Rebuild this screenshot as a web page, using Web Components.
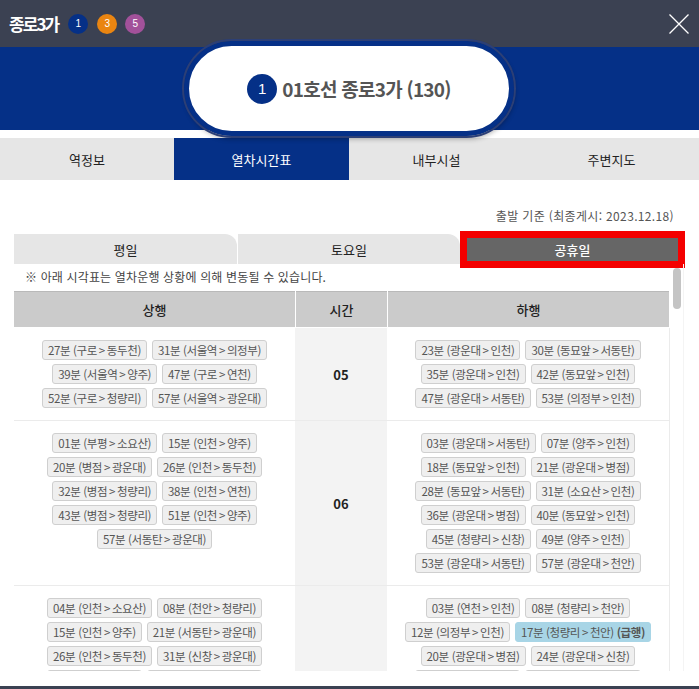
<!DOCTYPE html>
<html lang="ko">
<head>
<meta charset="utf-8">
<title>종로3가</title>
<style>
  html, body { margin: 0; padding: 0; background: #fff; }
  body { font-family: "Noto Sans CJK KR", "Noto Sans", sans-serif; width: 699px; height: 689px; overflow: hidden; }
</style>
</head>
<body>
<station-popup>
  <popup-header slot="header" title="종로3가">
    <line-badge color="#053087">1</line-badge>
    <line-badge color="#ea8511" style="margin-left:9px">3</line-badge>
    <line-badge color="#a2519a" style="margin-left:8px">5</line-badge>
  </popup-header>
  <station-banner slot="banner">01호선 종로3가 (130)</station-banner>
  <main-tabs slot="tabs"></main-tabs>
  <day-tabs slot="days"></day-tabs>

  <time-table slot="table">
    <time-row hour="05">
      <time-chip slot="up">27분 (구로&thinsp;&gt;&thinsp;동두천)</time-chip><time-chip slot="up">31분 (서울역&thinsp;&gt;&thinsp;의정부)</time-chip>
      <time-chip slot="up">39분 (서울역&thinsp;&gt;&thinsp;양주)</time-chip><time-chip slot="up">47분 (구로&thinsp;&gt;&thinsp;연천)</time-chip>
      <time-chip slot="up">52분 (구로&thinsp;&gt;&thinsp;청량리)</time-chip><time-chip slot="up">57분 (서울역&thinsp;&gt;&thinsp;광운대)</time-chip>
      <time-chip slot="down">23분 (광운대&thinsp;&gt;&thinsp;인천)</time-chip><time-chip slot="down">30분 (동묘앞&thinsp;&gt;&thinsp;서동탄)</time-chip>
      <time-chip slot="down">35분 (광운대&thinsp;&gt;&thinsp;인천)</time-chip><time-chip slot="down">42분 (동묘앞&thinsp;&gt;&thinsp;인천)</time-chip>
      <time-chip slot="down">47분 (광운대&thinsp;&gt;&thinsp;서동탄)</time-chip><time-chip slot="down">53분 (의정부&thinsp;&gt;&thinsp;인천)</time-chip>
    </time-row>
    <time-row hour="06">
      <time-chip slot="up">01분 (부평&thinsp;&gt;&thinsp;소요산)</time-chip><time-chip slot="up">15분 (인천&thinsp;&gt;&thinsp;양주)</time-chip>
      <time-chip slot="up">20분 (병점&thinsp;&gt;&thinsp;광운대)</time-chip><time-chip slot="up">26분 (인천&thinsp;&gt;&thinsp;동두천)</time-chip>
      <time-chip slot="up">32분 (병점&thinsp;&gt;&thinsp;청량리)</time-chip><time-chip slot="up">38분 (인천&thinsp;&gt;&thinsp;연천)</time-chip>
      <time-chip slot="up">43분 (병점&thinsp;&gt;&thinsp;청량리)</time-chip><time-chip slot="up">51분 (인천&thinsp;&gt;&thinsp;양주)</time-chip>
      <time-chip slot="up">57분 (서동탄&thinsp;&gt;&thinsp;광운대)</time-chip>
      <time-chip slot="down">03분 (광운대&thinsp;&gt;&thinsp;서동탄)</time-chip><time-chip slot="down">07분 (양주&thinsp;&gt;&thinsp;인천)</time-chip>
      <time-chip slot="down">18분 (동묘앞&thinsp;&gt;&thinsp;인천)</time-chip><time-chip slot="down">21분 (광운대&thinsp;&gt;&thinsp;병점)</time-chip>
      <time-chip slot="down">28분 (동묘앞&thinsp;&gt;&thinsp;서동탄)</time-chip><time-chip slot="down">31분 (소요산&thinsp;&gt;&thinsp;인천)</time-chip>
      <time-chip slot="down">36분 (광운대&thinsp;&gt;&thinsp;병점)</time-chip><time-chip slot="down">40분 (동묘앞&thinsp;&gt;&thinsp;인천)</time-chip>
      <time-chip slot="down">45분 (청량리&thinsp;&gt;&thinsp;신창)</time-chip><time-chip slot="down">49분 (양주&thinsp;&gt;&thinsp;인천)</time-chip>
      <time-chip slot="down">53분 (광운대&thinsp;&gt;&thinsp;서동탄)</time-chip><time-chip slot="down">57분 (광운대&thinsp;&gt;&thinsp;천안)</time-chip>
    </time-row>
    <time-row hour="07">
      <time-chip slot="up">04분 (인천&thinsp;&gt;&thinsp;소요산)</time-chip><time-chip slot="up">08분 (천안&thinsp;&gt;&thinsp;청량리)</time-chip>
      <time-chip slot="up">15분 (인천&thinsp;&gt;&thinsp;양주)</time-chip><time-chip slot="up">21분 (서동탄&thinsp;&gt;&thinsp;광운대)</time-chip>
      <time-chip slot="up">26분 (인천&thinsp;&gt;&thinsp;동두천)</time-chip><time-chip slot="up">31분 (신창&thinsp;&gt;&thinsp;광운대)</time-chip>
      <time-chip slot="up">38분 (인천&thinsp;&gt;&thinsp;양주)</time-chip><time-chip slot="up">42분 (서동탄&thinsp;&gt;&thinsp;광운대)</time-chip>
      <time-chip slot="down">03분 (연천&thinsp;&gt;&thinsp;인천)</time-chip><time-chip slot="down">08분 (청량리&thinsp;&gt;&thinsp;천안)</time-chip>
      <time-chip slot="down">12분 (의정부&thinsp;&gt;&thinsp;인천)</time-chip><time-chip slot="down" express>17분 (청량리&thinsp;&gt;&thinsp;천안) <b>(급행)</b></time-chip>
      <time-chip slot="down">20분 (광운대&thinsp;&gt;&thinsp;병점)</time-chip><time-chip slot="down">24분 (광운대&thinsp;&gt;&thinsp;신창)</time-chip>
      <time-chip slot="down">29분 (광운대&thinsp;&gt;&thinsp;병점)</time-chip><time-chip slot="down">33분 (동묘앞&thinsp;&gt;&thinsp;서동탄)</time-chip>
      <time-chip slot="down">38분 (광운대&thinsp;&gt;&thinsp;인천)</time-chip><time-chip slot="down">42분 (청량리&thinsp;&gt;&thinsp;신창)</time-chip>
      <time-chip slot="down">46분 (광운대&thinsp;&gt;&thinsp;병점)</time-chip><time-chip slot="down">50분 (동묘앞&thinsp;&gt;&thinsp;인천)</time-chip>
      <time-chip slot="down">53분 (광운대&thinsp;&gt;&thinsp;서동탄)</time-chip><time-chip slot="down">57분 (양주&thinsp;&gt;&thinsp;인천)</time-chip>
      <time-chip slot="down">59분 (광운대&thinsp;&gt;&thinsp;인천)</time-chip>
    </time-row>
  </time-table>
</station-popup>

<script>
// Small numbered circle used for line numbers
class LineBadge extends HTMLElement {
    constructor() {
        super();
        this.attachShadow({ mode: 'open' });
        this.shadowRoot.innerHTML = `
            <style>
                :host {
                    display: inline-flex;
                    align-items: center;
                    justify-content: center;
                    width: var(--size, 20px);
                    height: var(--size, 20px);
                    border-radius: 50%;
                    color: #fff;
                    font: var(--num-size, 10px)/1 "Liberation Sans", sans-serif;
                    flex: none;
                }
            </style>
            <slot></slot>
        `;
    }

    connectedCallback() {
        this.style.background = this.getAttribute('color') || '#053087';
    }
}

// Dark title bar with the station name and close button
class PopupHeader extends HTMLElement {
    constructor() {
        super();
        this.attachShadow({ mode: 'open' });
        this.shadowRoot.innerHTML = `
            <style>
                :host {
                    display: flex;
                    align-items: center;
                    height: 47px;
                    background: #3b4152;
                    padding: 0 10px 0 9px;
                    box-sizing: border-box;
                }
                .title {
                    color: #fff;
                    font-size: 17px;
                    font-weight: 700;
                    letter-spacing: -1.9px;
                    margin-right: 10px;
                    line-height: 47px;
                }
                svg { margin-left: auto; display: block; }
            </style>
            <span class="title"></span>
            <slot></slot>
            <svg width="20" height="20" viewBox="0 0 20 20" fill="none" stroke="#fff" stroke-width="1.3">
                <path d="M.5 .5 19.5 19.5M19.5 .5 .5 19.5"/>
            </svg>
        `;
    }

    connectedCallback() {
        this.shadowRoot.querySelector('.title').textContent = this.getAttribute('title');
        this.removeAttribute('title');
    }
}

// Blue band with the white pill in the middle, pill hangs over the band edges
class StationBanner extends HTMLElement {
    constructor() {
        super();
        this.attachShadow({ mode: 'open' });
        this.shadowRoot.innerHTML = `
            <style>
                :host {
                    display: flex;
                    justify-content: center;
                    height: 83px;
                    background: #053087;
                }
                .pill {
                    position: relative;
                    top: -6px;
                    left: -.5px;
                    display: flex;
                    align-items: center;
                    justify-content: center;
                    gap: 5px;
                    box-sizing: border-box;
                    width: 330px;
                    height: 95px;
                    border: 5px solid #053087;
                    border-radius: 48px;
                    background: #fff;
                    outline: 2px solid #2c3f76;
                    box-shadow: 1px 3px 5px rgba(0, 0, 0, .3);
                    color: #555;
                    font-size: 19px;
                    font-weight: 700;
                    letter-spacing: -.75px;
                }
                line-badge { --size: 30px; --num-size: 15px; letter-spacing: 0; }
            </style>
            <div class="pill">
                <line-badge color="#053087">1</line-badge>
                <span><slot></slot></span>
            </div>
        `;
    }
}

// Four section tabs below the banner
class MainTabs extends HTMLElement {
    constructor() {
        super();
        this.attachShadow({ mode: 'open' });
        this.shadowRoot.innerHTML = `
            <style>
                :host {
                    display: grid;
                    grid-template-columns: 174px 175px 175px 175px;
                    height: 42px;
                    margin-top: 8px;
                    background: #e6e6e6;
                    font-size: 13px;
                    color: #222;
                }
                div { display: flex; align-items: center; justify-content: center; }
                .on { background: #053087; color: #fff; }
            </style>
            <div>역정보</div>
            <div class="on">열차시간표</div>
            <div>내부시설</div>
            <div>주변지도</div>
        `;
    }
}

// Weekday / saturday / holiday selector, the holiday one is boxed in red
class DayTabs extends HTMLElement {
    constructor() {
        super();
        this.attachShadow({ mode: 'open' });
        this.shadowRoot.innerHTML = `
            <style>
                :host {
                    display: grid;
                    grid-template-columns: 223px 222px 226px;
                    column-gap: 1px;
                    width: 671px;
                    height: 30px;
                    font-size: 13px;
                    color: #222;
                    position: relative;
                }
                div {
                    display: flex;
                    align-items: center;
                    justify-content: center;
                    background: #e6e6e6;
                    border-top-right-radius: 12px;
                }
                .on {
                    position: relative;
                    margin: 4px 9px 3px 6px;
                    background: #666;
                    color: #fff;
                    font-weight: 500;
                    border-radius: 0;
                    outline: 7px solid #f40000;
                }
            </style>
            <div>평일</div>
            <div>토요일</div>
            <div class="on">공휴일</div>
        `;
    }
}

// Timetable frame: fixed header row, clipped body and a scrollbar on the right
class TimeTable extends HTMLElement {
    constructor() {
        super();
        this.attachShadow({ mode: 'open' });
        this.shadowRoot.innerHTML = `
            <style>
                :host {
                    display: block;
                    position: relative;
                    width: 669px;
                    height: 407px;
                    overflow: hidden;
                    border-right: 1px solid #f4f4f4;
                }
                .note {
                    height: 27px;
                    line-height: 26px;
                    padding-left: 11px;
                    font-size: 12px;
                    letter-spacing: .15px;
                    color: #444;
                }
                .head {
                    display: grid;
                    grid-template-columns: 281px 91px 281px;
                    column-gap: 1px;
                    width: 655px;
                    height: 36px;
                    font-size: 13px;
                    font-weight: 500;
                    color: #222;
                }
                .head div {
                    display: flex;
                    align-items: center;
                    justify-content: center;
                    background: #cbcbcb;
                    border-top: 1px solid #b9b9b9;
                }
                .body {
                    width: 655px;
                    margin-top: 1px;
                    border-right: 1px solid #ebebeb;
                    height: 343px;
                    overflow: hidden;
                }
                .thumb {
                    position: absolute;
                    right: 2px;
                    top: 4px;
                    width: 8px;
                    height: 41px;
                    border-radius: 4px;
                    background: #c4c4c4;
                }
            </style>
            <div class="note">※ 아래 시각표는 열차운행 상황에 의해 변동될 수 있습니다.</div>
            <div class="head"><div>상행</div><div>시간</div><div>하행</div></div>
            <div class="body"><slot></slot></div>
            <div class="thumb"></div>
        `;
    }
}

// One hour of the timetable
class TimeRow extends HTMLElement {
    constructor() {
        super();
        this.attachShadow({ mode: 'open' });
        this.shadowRoot.innerHTML = `
            <style>
                :host {
                    display: grid;
                    grid-template-columns: 281px 92px 282px;
                    border-bottom: 1px solid #ebebeb;
                }
                .chips {
                    display: flex;
                    flex-wrap: wrap;
                    justify-content: center;
                    align-content: flex-start;
                    gap: 4px 5px;
                    padding: 12px 8px;
                }
                .hour {
                    display: flex;
                    align-items: center;
                    justify-content: center;
                    background: #f3f3f3;
                    font-size: 13px;
                    font-weight: 700;
                    color: #222;
                }
            </style>
            <div class="chips"><slot name="up"></slot></div>
            <div class="hour"></div>
            <div class="chips"><slot name="down"></slot></div>
        `;
    }

    connectedCallback() {
        this.shadowRoot.querySelector('.hour').textContent = this.getAttribute('hour');
    }
}

// A single departure, blue when it is an express
class TimeChip extends HTMLElement {
    constructor() {
        super();
        this.attachShadow({ mode: 'open' });
        this.shadowRoot.innerHTML = `
            <style>
                :host {
                    display: block;
                    box-sizing: border-box;
                    height: 20px;
                    padding: 0 5px;
                    border: 1px solid #cfcfcf;
                    border-radius: 3px;
                    background: #efefef;
                    color: #555;
                    font-size: 11.5px;
                    line-height: 18px;
                    letter-spacing: -.38px;
                    white-space: nowrap;
                }
                :host([express]) { background: #a8d5e6; border-color: #a8d5e6; }
            </style>
            <slot></slot>
        `;
    }
}

// Whole popup, everything is placed through named slots
class StationPopup extends HTMLElement {
    constructor() {
        super();
        this.attachShadow({ mode: 'open' });
        this.shadowRoot.innerHTML = `
            <style>
                :host {
                    display: block;
                    height: 689px;
                    position: relative;
                    background: #fff;
                }
                .content { padding: 0 14px; }
                .date {
                    height: 54px;
                    padding: 27px 11px 0 0;
                    box-sizing: border-box;
                    text-align: right;
                    font-size: 12px;
                    letter-spacing: .35px;
                    line-height: 18px;
                    color: #555;
                }
                .strip {
                    position: absolute;
                    left: 0;
                    right: 0;
                    bottom: 0;
                    height: 3px;
                    background: #3b4152;
                }
            </style>
            <slot name="header"></slot>
            <slot name="banner"></slot>
            <slot name="tabs"></slot>
            <div class="content">
                <div class="date">출발 기준 (최종게시: 2023.12.18)</div>
                <slot name="days"></slot>
                <slot name="table"></slot>
            </div>
            <div class="strip"></div>
        `;
    }
}

customElements.define('line-badge', LineBadge);
customElements.define('popup-header', PopupHeader);
customElements.define('station-banner', StationBanner);
customElements.define('main-tabs', MainTabs);
customElements.define('day-tabs', DayTabs);
customElements.define('time-table', TimeTable);
customElements.define('time-row', TimeRow);
customElements.define('time-chip', TimeChip);
customElements.define('station-popup', StationPopup);
</script>
</body>
</html>
